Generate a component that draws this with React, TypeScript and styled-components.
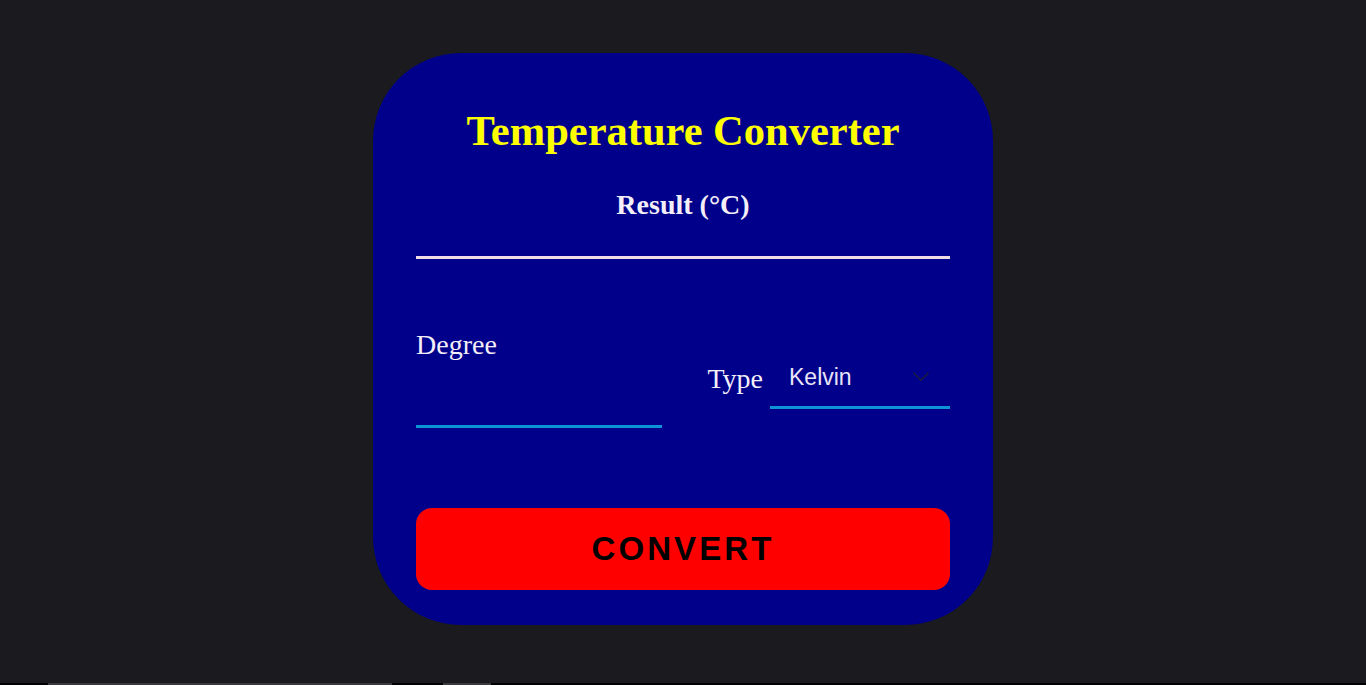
import { useState } from "react"
import styled, { createGlobalStyle } from "styled-components"

const GlobalStyle = createGlobalStyle`
  html, body {
    margin: 0;
    padding: 0;
    background: #1b1a1f;
  }
  #root {
    min-height: 100vh;
  }
`

export default function App() {
  const [degree, setDegree] = useState("")
  const [type, setType] = useState("kelvin")

  return (
    <>
      <GlobalStyle />
      <Page>
        <Card>
          <Title>Temperature Converter</Title>
          <ResultLabel>Result (°C)</ResultLabel>
          <ResultLine />
          <InputRow>
            <DegreeField>
              <FieldLabel htmlFor="degree">Degree</FieldLabel>
              <DegreeInput id="degree" value={degree} onChange={(e) => setDegree(e.target.value)} />
            </DegreeField>
            <TypeGroup>
              <FieldLabel htmlFor="type">Type</FieldLabel>
              <SelectWrap>
                <Select id="type" value={type} onChange={(e) => setType(e.target.value)}>
                  <option value="kelvin">Kelvin</option>
                  <option value="fahrenheit">Fahrenheit</option>
                </Select>
                <Chevron viewBox="0 0 20 12" aria-hidden>
                  <path d="M1 1 L10 10 L19 1" fill="none" stroke="#1d1d3a" strokeWidth="1.6" />
                </Chevron>
              </SelectWrap>
            </TypeGroup>
          </InputRow>
          <ConvertButton>CONVERT</ConvertButton>
        </Card>
        <BottomStrip>
          <StripThumb $width={344} $offset={48} />
          <StripThumb $width={48} $offset={51} />
        </BottomStrip>
      </Page>
    </>
  )
}

const Page = styled.div`
  min-height: 100vh;
  display: flex;
  flex-direction: column;
  align-items: center;
  padding-top: 53px;
  box-sizing: border-box;
`

const Card = styled.div`
  width: 620px;
  height: 572px;
  box-sizing: border-box;
  padding: 0 43px;
  background: #00008b;
  border-radius: 88px;
  display: flex;
  flex-direction: column;
`

const Title = styled.h1`
  margin: 52px 0 0;
  font-family: "Liberation Serif", "Times New Roman", serif;
  font-weight: bold;
  font-size: 42.5px;
  line-height: 52px;
  color: #ffff00;
  text-align: center;
`

const ResultLabel = styled.h3`
  margin: 32px 0 0;
  font-family: "Liberation Serif", "Times New Roman", serif;
  font-weight: bold;
  font-size: 28px;
  line-height: 32px;
  color: #f4eef8;
  text-align: center;
`

const ResultLine = styled.div`
  margin-top: 35px;
  height: 3px;
  background: #efdbe6;
`

const InputRow = styled.div`
  margin-top: 70px;
  display: flex;
  align-items: center;
  justify-content: space-between;
`

const DegreeField = styled.div`
  display: flex;
  flex-direction: column;
  width: 246px;
`

const FieldLabel = styled.label`
  font-family: "Liberation Serif", "Times New Roman", serif;
  font-size: 28px;
  line-height: 32px;
  color: #f4eef8;
`

const DegreeInput = styled.input`
  height: 67px;
  box-sizing: border-box;
  border: none;
  border-bottom: 3px solid #0d93d6;
  background: transparent;
  outline: none;
  color: #f4eef8;
  font-size: 20px;
  padding: 0;
`

const TypeGroup = styled.div`
  display: flex;
  align-items: center;
  gap: 7px;
`

const SelectWrap = styled.div`
  position: relative;
  width: 180px;
`

const Select = styled.select`
  appearance: none;
  width: 100%;
  height: 61px;
  box-sizing: border-box;
  padding: 0 0 0 19px;
  border: none;
  border-bottom: 3px solid #0d93d6;
  background: transparent;
  color: #e8e4f6;
  font-family: "Liberation Sans", Arial, sans-serif;
  font-size: 23px;
  outline: none;

  option {
    color: #000;
  }
`

const Chevron = styled.svg`
  position: absolute;
  right: 20px;
  top: 24px;
  width: 18px;
  height: 10px;
  pointer-events: none;
`

const ConvertButton = styled.button`
  margin-top: 80px;
  height: 82px;
  border: none;
  border-radius: 16px;
  background: #ff0000;
  color: #000;
  font-family: "Liberation Sans", Arial, sans-serif;
  font-weight: bold;
  font-size: 33px;
  letter-spacing: 3.1px;
  cursor: pointer;
`

const BottomStrip = styled.div`
  margin-top: auto;
  align-self: stretch;
  height: 2px;
  background: #000;
  display: flex;
`

const StripThumb = styled.div<{ $width: number; $offset: number }>`
  width: ${(p) => p.$width}px;
  margin-left: ${(p) => p.$offset}px;
  background: #3a3a3c;
`
